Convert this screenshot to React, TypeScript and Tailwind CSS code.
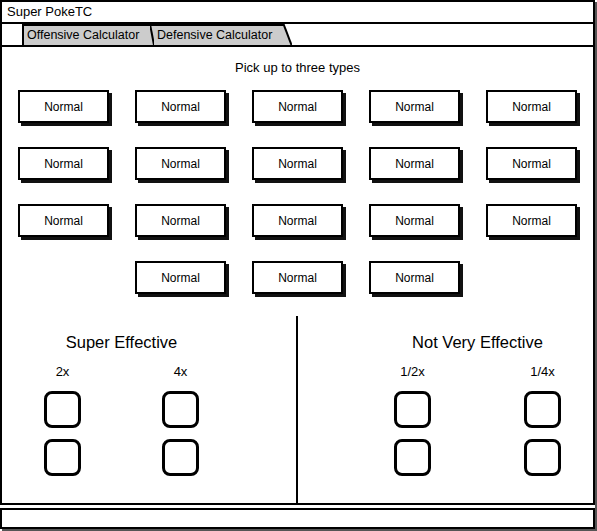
import React from 'react';

const font = { fontFamily: '"Liberation Sans", Arial, sans-serif' };

const TypeButton: React.FC<{ className?: string }> = ({ className = '' }) => (
  <div
    className={`w-[91px] h-[33px] border-2 border-black bg-white shadow-[3px_3px_0_#111] flex items-center justify-center text-[12px] text-black ${className}`}
  >
    Normal
  </div>
);

const Box: React.FC = () => (
  <div className="w-[37px] h-[37px] border-[3px] border-black rounded-[8px] bg-white" />
);

const Group: React.FC<{ title: string; labels: [string, string]; gap: string }> = ({
  title,
  labels,
  gap,
}) => (
  <div className="w-fit flex flex-col items-center pt-[17px]">
    <div className="text-[16.5px] leading-[18px] text-black whitespace-nowrap">{title}</div>
    <div className={`grid grid-cols-[37px_37px] ${gap} mt-[14px]`}>
      {labels.map((l) => (
        <div key={l} className="flex justify-center text-[13px] leading-[14px] w-[37px]">
          <span className="whitespace-nowrap">{l}</span>
        </div>
      ))}
      <div className="col-span-2 h-[12px]" />
      <Box />
      <Box />
      <div className="col-span-2 h-[11px]" />
      <Box />
      <Box />
    </div>
  </div>
);

export default function App() {
  return (
    <div className="w-[597px] h-[531px] bg-white" style={font}>
      <div className="w-[595px] h-[529px] flex flex-col shadow-[2px_2px_0_#555]">
        {/* title bar */}
        <div className="h-[24px] border-2 border-black flex items-center pl-[5px] text-[13px] text-black">
          Super PokeTC
        </div>

        {/* tabs */}
        <div className="h-[23px] border-x-2 border-b-2 border-black flex items-end pl-[20px] text-[12.5px] text-black">
          <div className="h-[21px] w-[128px] bg-[#cccccc] border-l-2 border-t-2 border-black flex items-center pl-[3px] whitespace-nowrap">
            Offensive Calculator
          </div>
          <svg width="4" height="21" className="block">
            <rect x="0" y="0" width="4" height="21" fill="#cccccc" />
            <line x1="0" y1="1" x2="4" y2="1" stroke="black" strokeWidth="2" />
            <line x1="0" y1="0" x2="4" y2="21" stroke="black" strokeWidth="2" />
          </svg>
          <div className="h-[21px] w-[129px] bg-[#cccccc] border-t-2 border-black flex items-center pl-[3px] whitespace-nowrap">
            Defensive Calculator
          </div>
          <svg width="9" height="21" className="block">
            <polygon points="0,0 1,0 9,21 0,21" fill="#cccccc" />
            <line x1="0" y1="1" x2="1" y2="1" stroke="black" strokeWidth="2" />
            <line x1="0.5" y1="0" x2="8.5" y2="21" stroke="black" strokeWidth="2" />
          </svg>
        </div>

        {/* content */}
        <div className="flex-1 border-x-2 border-b-2 border-black flex flex-col">
          <div className="text-center text-[13px] leading-[16px] pt-[13px] text-black">
            Pick up to three types
          </div>
          <div className="grid grid-cols-[repeat(5,91px)] gap-x-[26px] gap-y-[24px] pl-[16px] mt-[14px]">
            {Array.from({ length: 15 }).map((_, i) => (
              <TypeButton key={i} />
            ))}
            <TypeButton className="col-start-2" />
            <TypeButton />
            <TypeButton />
          </div>
          <div className="flex flex-1 mt-[22px]">
            <div className="w-[294px] pl-[42px]">
              <Group title="Super Effective" labels={['2x', '4x']} gap="gap-x-[81px]" />
            </div>
            <div className="w-[2px] bg-black" />
            <div className="flex-1 pl-[96px]">
              <Group title="Not Very Effective" labels={['1/2x', '1/4x']} gap="gap-x-[93px]" />
            </div>
          </div>
        </div>

        {/* status bar */}
        <div className="h-[3px]" />
        <div className="h-[21px] border-2 border-black" />
      </div>
    </div>
  );
}
